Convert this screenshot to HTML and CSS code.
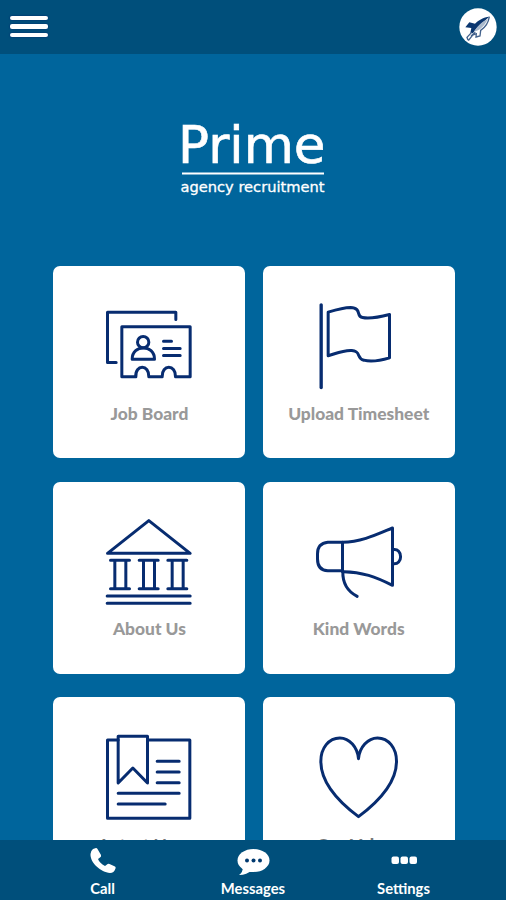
FILE: index.html
```
<!DOCTYPE html>
<html lang="en">
<head>
  <meta charset="UTF-8">
  <title>Prime Agency Recruitment</title>
  <link rel="stylesheet" href="styles.css">
</head>
<body>
  <div class="app">
    <header class="topbar">
      <button class="menu-btn" aria-label="Menu"><span></span><span></span><span></span></button>
      <svg class="rocket" viewBox="0 0 114 114">
        <circle cx="57" cy="57" r="56" fill="#fff"/>
        <path class="rocket-body" d="M91 26C73 27 58 37 48 47L31 43 19 58 37 60 34 74 42 76C50 60 70 44 91 26Z"/>
        <path class="rocket-hull" d="M86 33C68 42 52 57 45 71C64 67 79 51 86 33Z"/>
        <path class="rocket-line" d="M91 26C88 46 76 60 65 67L63 84 51 87 52 77 41 81 28 98M38 73L24 88 27 96M49 73L36 84"/>
      </svg>
    </header>

    <main class="content">
      <svg class="logo" viewBox="0 -20 156 100">
        <text class="logo-name" x="0" y="43" textLength="147.500" lengthAdjust="spacingAndGlyphs">Prime</text>
        <rect x="4" y="52.500" width="142" height="2" fill="#fff"/>
        <text class="logo-tag" x="2.500" y="71.500" textLength="144" lengthAdjust="spacingAndGlyphs">agency recruitment</text>
      </svg>

      <div class="grid">
        <a class="card">
          <svg class="icon" viewBox="154.5 115.5 288 288">
            <path d="M200 309H174V158H379V180"/>
            <path d="M217 202H422V352H378C380 314 336 314 338 352H298C300 314 256 314 259 352H217Z"/>
            <circle cx="281" cy="248" r="17"/>
            <path d="M248 299C248 254 315 254 315 299ZM342 245H366M342 267H392M342 288H392"/>
          </svg>
          <span class="label">Job Board</span>
        </a>
        <a class="card">
          <svg class="icon" viewBox="157.5 115.5 288 288">
            <path d="M188 136V384" stroke-width="10"/>
            <path d="M209 158C235 150 256 144 276 144C312 146 291 171 312 174C336 179 366 172 393 165V295C366 303 336 307 316 302C293 297 309 275 280 273C256 271 235 281 209 289Z"/>
          </svg>
          <span class="label">Upload Timesheet</span>
        </a>
        <a class="card">
          <svg class="icon" viewBox="154.5 108 288 288">
            <path d="M174 226L298 128 422 226Z"/>
            <path d="M183 247H240M183 332H240M196 247V332M229 247V332M269 247H326M269 332H326M282 247V332M315 247V332M355 247H412M355 332H412M368 247V332M401 247V332"/>
            <path d="M173 354H422M173 376H422"/>
          </svg>
          <span class="label">About Us</span>
        </a>
        <a class="card">
          <svg class="icon" viewBox="157.5 108 288 288">
            <path d="M252 193H208Q177 196 177 228V243Q177 277 208 278H252Z"/>
            <path d="M252 193C309 192 354 170 402 150V322C354 298 309 280 252 281"/>
            <path d="M253 280C252 315 269 341 296 355M403 215C434 209 434 263 403 257"/>
          </svg>
          <span class="label">Kind Words</span>
        </a>
        <a class="card">
          <svg class="icon" viewBox="154.5 117 288 288">
            <path d="M206 150H174V385H421V150H295"/>
            <path d="M206 139H294V279L250 234 206 279Z"/>
            <path d="M323 214H389M323 246H389M323 278H389M206 310H389M206 342H347"/>
          </svg>
          <span class="label label-low">Latest News</span>
        </a>
        <a class="card">
          <svg class="icon" viewBox="157.5 117 288 288">
            <path d="M300 206C297 172 273 144 244 144C211 144 187 174 187 214C187 279 241 336 300 380C359 336 414 279 414 214C414 174 390 144 357 144C328 144 303 172 300 206Z"/>
          </svg>
          <span class="label label-low">Our Values</span>
        </a>
      </div>
    </main>

    <nav class="tabbar">
      <a class="tab">
        <svg class="tab-icon" viewBox="0 0 36 30">
          <path d="M8 3L11 2Q12 2 12.5 3L16 9Q16.5 10.500 15 11.500L13 13Q14.500 17 20 20L22 18.500Q23 17.500 24.500 18L30 20.500Q31 21 30.500 22.500Q29 27 25 27C16 26 5 17 5.500 8Q5.500 5 8 3Z"/>
        </svg>
        <span>Call</span>
      </a>
      <a class="tab">
        <svg class="tab-icon" viewBox="0 0 36 30">
          <ellipse cx="18.500" cy="14.500" rx="16" ry="11.500"/>
          <path d="M8 21Q8 26 4 29Q12 29 17 24Z"/>
          <g class="dots"><circle cx="12" cy="14.500" r="2"/><circle cx="18.500" cy="14.500" r="2"/><circle cx="25" cy="14.500" r="2"/></g>
        </svg>
        <span>Messages</span>
      </a>
      <a class="tab">
        <svg class="tab-icon" viewBox="0 0 36 30">
          <rect x="5.500" y="10.500" width="7.500" height="7.500" rx="2"/>
          <rect x="14.500" y="10.500" width="7.500" height="7.500" rx="2"/>
          <rect x="23.500" y="10.500" width="7.500" height="7.500" rx="2"/>
        </svg>
        <span>Settings</span>
      </a>
    </nav>
  </div>
</body>
</html>
```
FILE: styles.css
```
* {
  box-sizing: border-box;
}

body {
  margin: 0;
  background-color: #00659c;
  font-family: Lato, "Liberation Sans", sans-serif;
}

.app {
  display: flex;
  flex-direction: column;
  height: 900px;
  overflow: hidden;
}

.topbar {
  display: flex;
  justify-content: space-between;
  align-items: center;
  flex: none;
  height: 54px;
  padding: 0 9px 1px 10px;
  background-color: #004f7b;
}

.menu-btn {
  display: flex;
  flex-direction: column;
  gap: 4px;
  padding: 0;
  border: none;
  background: none;
}

.menu-btn span {
  width: 37.5px;
  height: 4.5px;
  border-radius: 2px;
  background-color: #fff;
  box-shadow: 0 0 2px #00206a;
}

.rocket {
  width: 38px;
  height: 38px;
}

.rocket-body {
  fill: #0b3770;
}

.rocket-hull {
  fill: #a9b9cc;
}

.rocket-line {
  fill: none;
  stroke: #43628c;
  stroke-width: 4;
}

.content {
  flex: 1;
  min-height: 0;
  overflow: hidden;
}

.logo {
  display: block;
  width: 156px;
  height: 100px;
  margin: 46px auto 0 178px;
}

.logo-name,
.logo-tag {
  font-family: "DejaVu Sans", Verdana, sans-serif;
  fill: #fff;
}

.logo-name {
  font-size: 51px;
  stroke: #fff;
  stroke-width: 0.6px;
}

.logo-tag {
  font-size: 14px;
  stroke: #fff;
  stroke-width: 0.3px;
}

.grid {
  display: grid;
  grid-template-columns: 192px 192px;
  grid-auto-rows: 192px;
  gap: 23.4px 17.3px;
  padding: 66.4px 0 0 53.4px;
}

.card {
  display: flex;
  flex-direction: column;
  align-items: center;
  padding-top: 32px;
  border-radius: 7px;
  background-color: #fff;
}

.icon {
  flex: none;
  width: 96px;
  height: 96px;
  fill: none;
  stroke: #072c70;
  stroke-width: 9;
  stroke-linecap: round;
  stroke-linejoin: round;
}

.label {
  margin-top: 8.3px;
  color: #999;
  font-size: 17.4px;
  font-weight: 900;
  line-height: 22px;
}

.label-low {
  margin-top: 8.8px;
  color: #777;
}

.tabbar {
  display: grid;
  grid-template-columns: repeat(3, 150.5px);
  justify-content: center;
  flex: none;
  height: 60.5px;
  background-color: #004f7b;
}

.tab {
  display: flex;
  flex-direction: column;
  align-items: center;
  padding-top: 6px;
  color: #fff;
  font-size: 14.8px;
  font-weight: 700;
  line-height: 20px;
}

.tab-icon {
  width: 36px;
  height: 30px;
  margin-bottom: 2.5px;
  fill: #fff;
}

.dots {
  fill: #00396f;
}
```
